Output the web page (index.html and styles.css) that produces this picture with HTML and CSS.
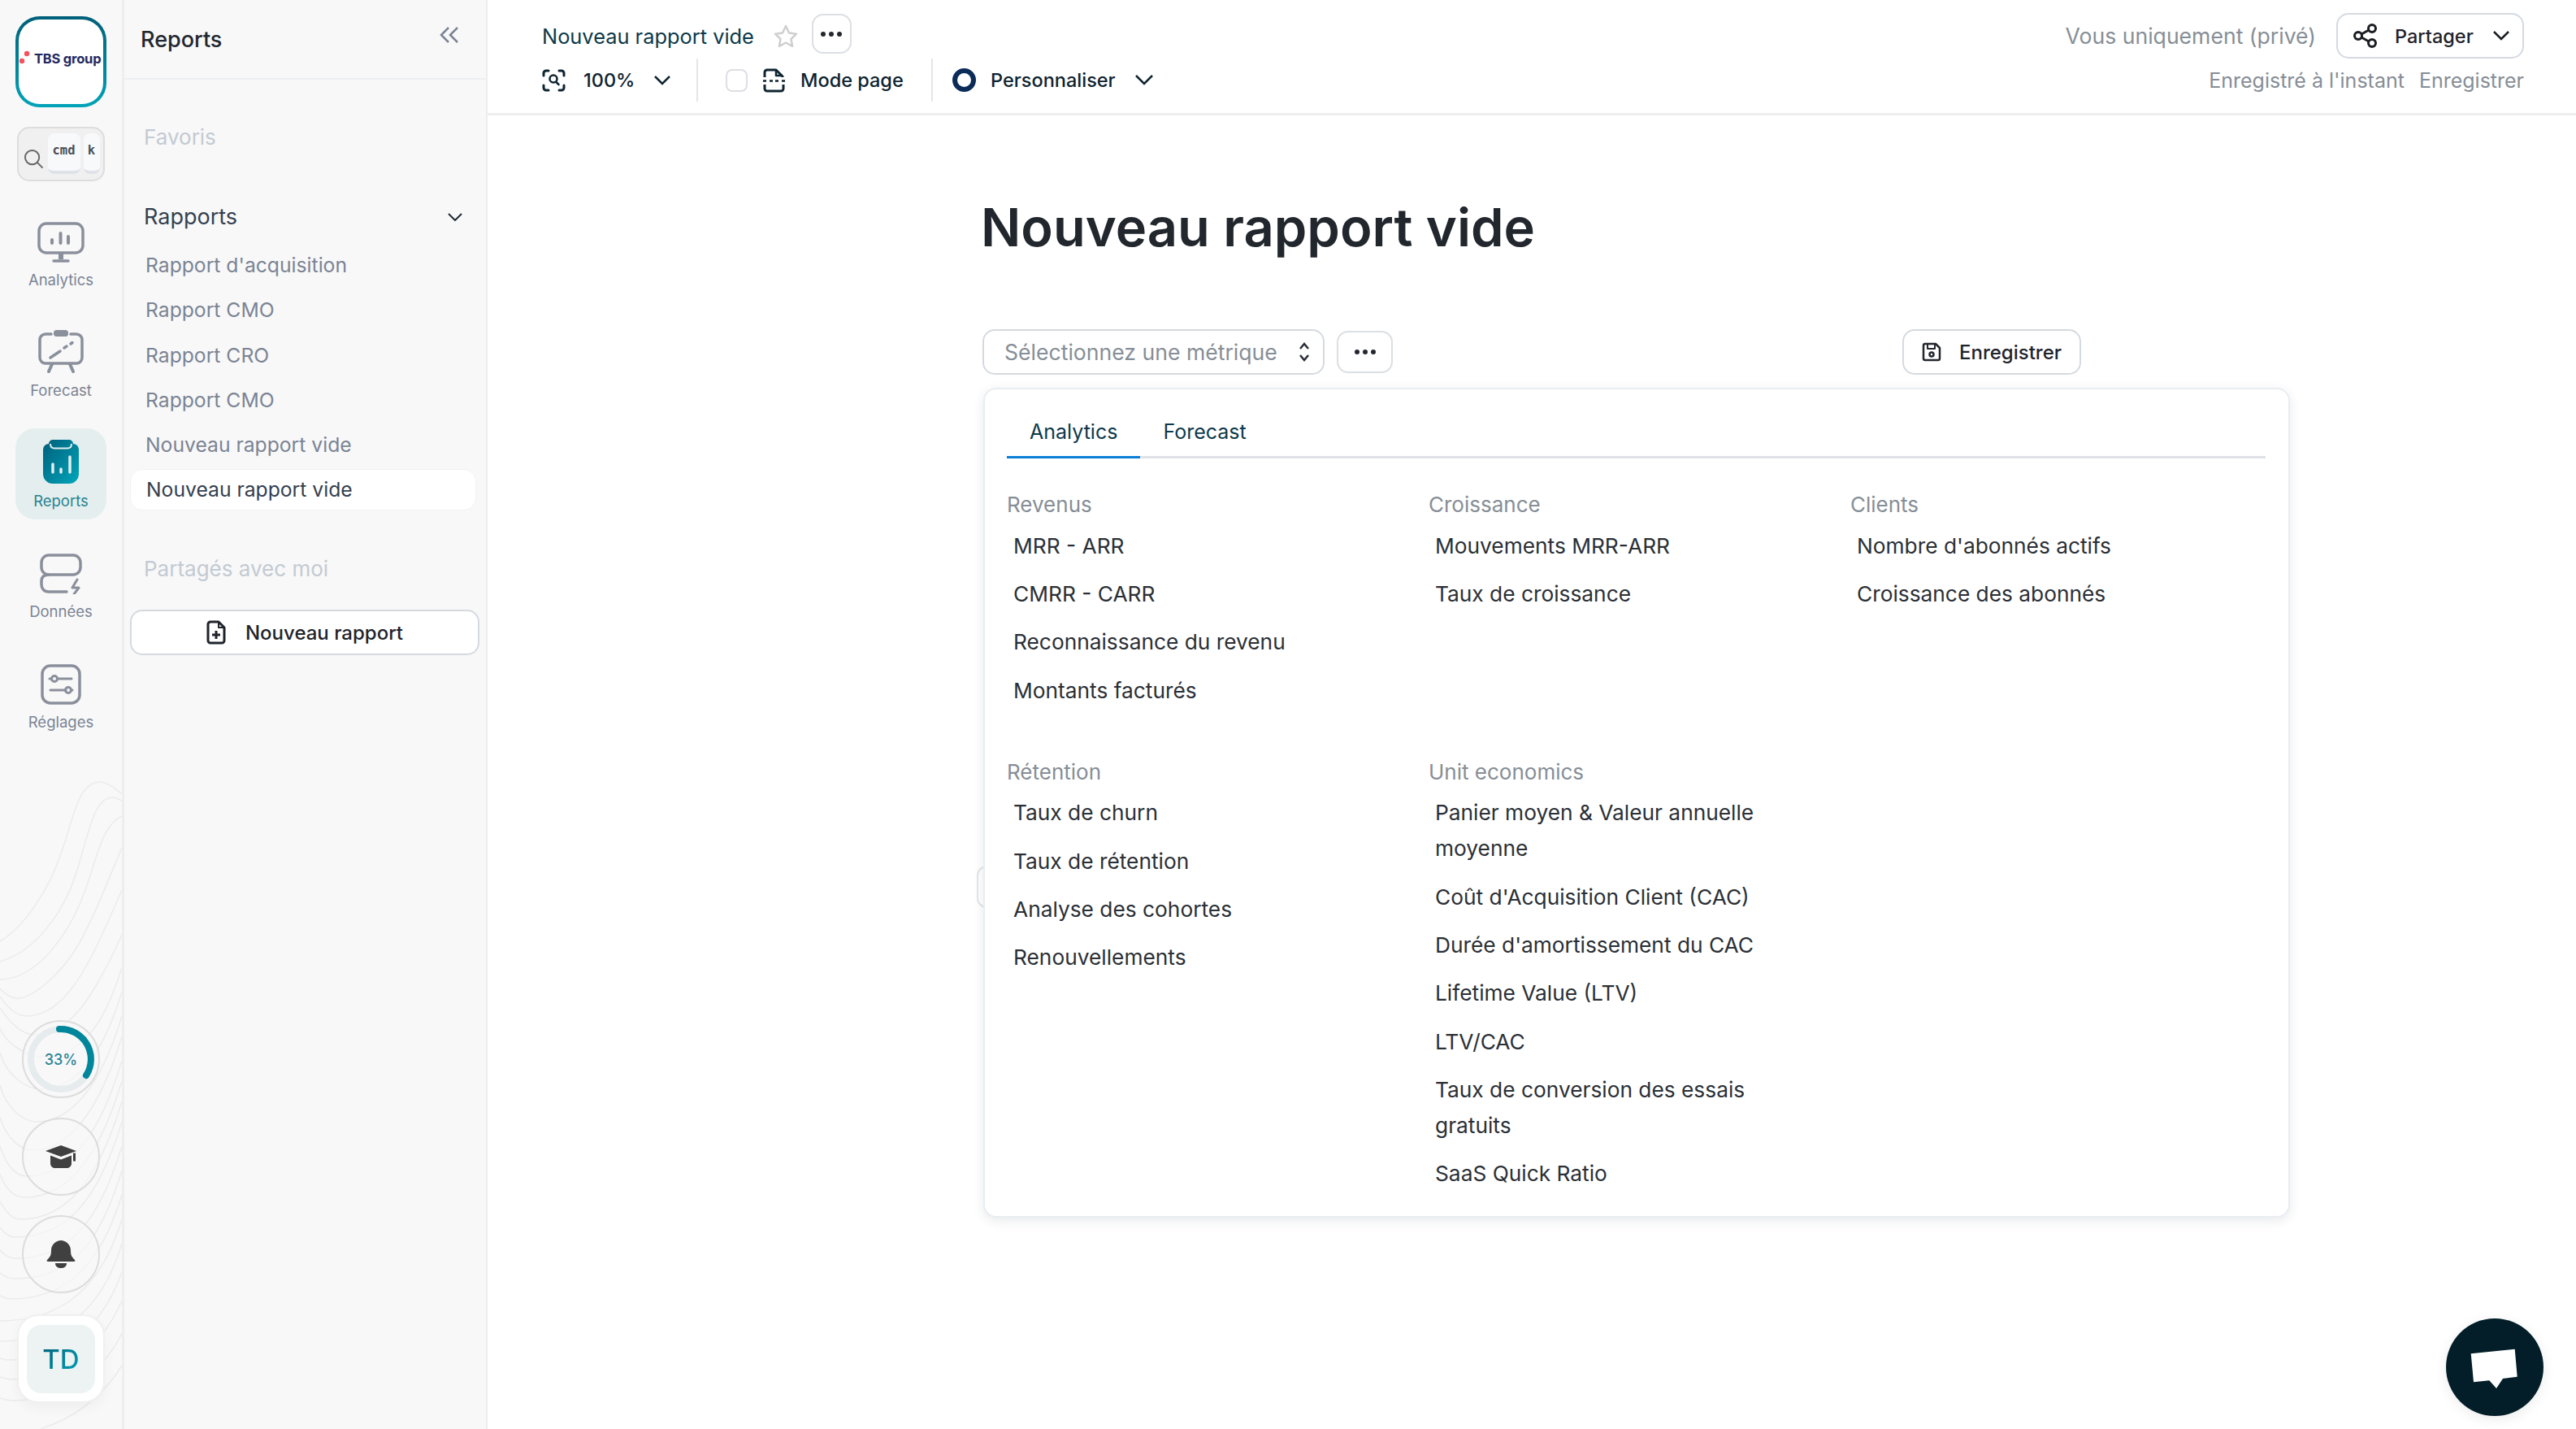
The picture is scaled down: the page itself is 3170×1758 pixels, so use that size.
FILE: index.html
```html
<!DOCTYPE html>
<html lang="fr">
<head>
  <meta charset="UTF-8">
  <title>Nouveau rapport vide</title>
  <link rel="stylesheet" href="styles.css">
</head>
<body>
  <svg width="0" height="0" class="defs">
    <defs>
      <linearGradient id="teal" x1="0" y1="0" x2="1" y2="1">
        <stop offset="0" stop-color="#005f7a"/>
        <stop offset="1" stop-color="#00a6bb"/>
      </linearGradient>
    </defs>
  </svg>

  <div class="app">
    <nav class="rail">
      <svg class="contours" width="150" height="810" viewBox="0 948 150 810" fill="none" stroke="#ebebeb" stroke-width="1.500">
        <path d="M150 977C140 968 130 962 123 962 95 962 90 1010 75 1050 60 1095 30 1140 0 1158"/>
        <path d="M150 985C145 982 142 981 138 981 115 981 108 1030 95 1070 80 1120 45 1170 0 1183"/>
        <path d="M150 1004C125 1015 118 1060 105 1095 85 1150 45 1205 0 1205"/>
        <path d="M150 1043C130 1090 115 1130 95 1165 70 1205 35 1230 20 1228 12 1227 5 1222 0 1216"/>
        <path d="M150 1095C130 1140 110 1190 85 1220 65 1245 45 1250 33 1250 20 1250 8 1238 0 1226"/>
        <path d="M150 1150C130 1195 105 1240 85 1255 70 1270 55 1273 43 1273 25 1273 10 1255 0 1240"/>
        <path d="M150 1190C120 1290 80 1300 50 1300 35 1300 8 1285 0 1265"/>
        <path d="M150 1220C120 1320 80 1340 50 1340 35 1340 8 1325 0 1295"/>
        <path d="M150 1250C120 1350 80 1380 45 1380 30 1380 8 1365 0 1335"/>
        <path d="M150 1275C120 1375 80 1415 40 1415 25 1415 8 1400 0 1375"/>
        <path d="M150 1305C120 1405 80 1447 33 1447 20 1447 8 1435 0 1410"/>
        <path d="M150 1330C120 1430 80 1473 30 1473 18 1473 8 1465 0 1445"/>
        <path d="M150 1355C120 1455 80 1500 25 1500 15 1500 8 1492 0 1478"/>
        <path d="M150 1380C120 1480 80 1522 18 1522 12 1522 6 1518 0 1510"/>
        <path d="M150 1410C120 1510 80 1548 20 1548 12 1548 6 1545 0 1538"/>
        <path d="M150 1440C120 1540 80 1573 18 1573 12 1573 6 1571 0 1566"/>
        <path d="M150 1470C120 1570 70 1598 13 1598 8 1598 4 1596 0 1594"/>
        <path d="M150 1500C120 1600 60 1625 0 1625"/>
        <path d="M150 1530C120 1630 60 1650 0 1650"/>
        <path d="M150 1565C120 1650 60 1673 10 1673 6 1673 3 1672 0 1671"/>
        <path d="M150 1600C120 1670 60 1697 15 1697 10 1697 5 1696 0 1694"/>
        <path d="M150 1640C125 1695 65 1723 15 1723 10 1723 5 1722 0 1720"/>
        <path d="M150 1680C125 1720 90 1745 50 1758"/>
      </svg>

      <div class="logo">
        <svg class="logo-dots" width="14" height="18" viewBox="0 0 14 18"><circle cx="10" cy="4" r="3.200" fill="#f5525f"/><circle cx="4" cy="13" r="3.200" fill="#f5525f"/></svg>
        <span class="logo-text">TBS group</span>
      </div>

      <div class="search">
        <svg width="25" height="25" viewBox="0 0 26 26" fill="none" stroke="#666" stroke-width="2"><circle cx="11" cy="11" r="9"/><path d="M17.500 17.500l7 7"/></svg>
        <span class="key key-cmd">cmd</span>
        <span class="key key-k">k</span>
      </div>

      <a class="rail-item">
        <svg width="58" height="50" viewBox="0 0 58 50" fill="none" stroke="#8a8f9c" stroke-width="3.500" stroke-linecap="round">
          <rect x="2" y="2" width="54" height="36" rx="9"/>
          <path d="M18 22v4M28.500 14v12M38 18v8" stroke-width="4"/>
          <path d="M29 39v7" stroke-width="6" stroke-linecap="butt"/>
          <path d="M20 48h18"/>
        </svg>
        <span>Analytics</span>
      </a>
      <a class="rail-item">
        <svg width="56" height="54" viewBox="0 0 56 54" fill="none" stroke="#8a8f9c" stroke-width="3.500" stroke-linecap="round">
          <path d="M16 6H9a7 7 0 0 0-7 7v22a7 7 0 0 0 7 7h38a7 7 0 0 0 7-7V13a7 7 0 0 0-7-7h-7"/>
          <rect x="19" y="1" width="18" height="8" rx="3.500" fill="#8a8f9c" stroke="none"/>
          <path d="M15 35l12-8M32 23l3-2M40 18l2-1.500"/>
          <path d="M17 43l-4 9M39 43l4 9" stroke-width="4"/>
        </svg>
        <span>Forecast</span>
      </a>
      <a class="rail-item rail-item-on">
        <svg width="44" height="54" viewBox="0 0 44 54">
          <path fill="url(#teal)" d="M12 0h20a5 5 0 0 1 5 5 7 7 0 0 1 7 7v30a12 12 0 0 1-12 12H12A12 12 0 0 1 0 42V12a7 7 0 0 1 7-7 5 5 0 0 1 5-5z"/>
          <path d="M9 5c0 4 2 5.500 5 5.500h16c3 0 5-1.500 5-5.500" fill="none" stroke="#e3eeef" stroke-width="2"/>
          <path d="M12 30v10M22 36v4M33 21v19" stroke="#e3eeef" stroke-width="3.500" stroke-linecap="round"/>
        </svg>
        <span>Reports</span>
      </a>
      <a class="rail-item">
        <svg width="52" height="50" viewBox="0 0 52 50" fill="none" stroke="#8a8f9c" stroke-width="3.500" stroke-linecap="round" stroke-linejoin="round">
          <rect x="2" y="2" width="48" height="24" rx="9"/>
          <path d="M11 26C5 26 2 29 2 34v4c0 5 3 9 9 9h22"/>
          <path d="M46 32l-6 10h8l-6 8" stroke-width="3"/>
        </svg>
        <span>Données</span>
      </a>
      <a class="rail-item">
        <svg width="50" height="50" viewBox="0 0 50 50" fill="none" stroke="#8a8f9c" stroke-width="3.500" stroke-linecap="round">
          <rect x="2" y="2" width="46" height="46" rx="10"/>
          <path d="M21 18h17M11 18h2M12 32h19M38 32h1" stroke-width="3"/>
          <circle cx="17" cy="18" r="3.500" stroke-width="3"/>
          <circle cx="34" cy="32" r="3.500" stroke-width="3"/>
        </svg>
        <span>Réglages</span>
      </a>

      <div class="rail-bottom">
        <div class="circle-btn progress">
          <svg width="92" height="92" viewBox="0 0 92 92" fill="none" stroke-width="8" stroke-linecap="round">
            <circle cx="46" cy="46" r="37" stroke="#e6ebee"/>
            <path d="M44 9A37 37 0 0 1 77 66" stroke="#00869b"/>
          </svg>
          <span class="progress-val">33%</span>
        </div>
        <div class="circle-btn">
          <svg width="40" height="30" viewBox="0 0 40 30" fill="#404040">
            <path d="M20 1L39 8 20 15 1 8z"/>
            <path d="M7 13.500l13 5 13-5V23c0 4-3 6-6 6H13c-3 0-6-2-6-6z"/>
            <rect x="35" y="10.500" width="3" height="10"/>
          </svg>
        </div>
        <div class="circle-btn">
          <svg width="36" height="36" viewBox="0 0 36 36" fill="#404040">
            <path d="M18 1c6 0 12 5 12 12 0 6 1 8 5 12 1 1 0 2-1 2H2c-1 0-2-1-1-2 4-4 5-6 5-12C6 6 12 1 18 1z"/>
            <path d="M11 29h14c0 4-3 6-7 6s-7-2-7-6z"/>
          </svg>
        </div>
        <div class="user-card"><span class="user-avatar"><b>TD</b></span></div>
      </div>
    </nav>

    <aside class="panel">
      <header class="panel-head">
        <span class="panel-title">Reports</span>
        <svg width="24" height="20" viewBox="0 0 24 20" fill="none" stroke="#7b8494" stroke-width="2.500"><path d="M11 1L2 10l9 9M22 1l-9 9 9 9"/></svg>
      </header>
      <div class="panel-body">
        <div class="sec-label sec-favs">Favoris</div>
        <div class="sec-open">
          <span>Rapports</span>
          <svg width="18" height="10" viewBox="0 0 18 10" fill="none" stroke="#1f2a35" stroke-width="2"><path d="M1 1l8 8 8-8"/></svg>
        </div>
        <ul class="report-list">
          <li>Rapport d'acquisition</li>
          <li>Rapport CMO</li>
          <li>Rapport CRO</li>
          <li>Rapport CMO</li>
          <li>Nouveau rapport vide</li>
          <li class="report-on">Nouveau rapport vide</li>
        </ul>
        <div class="sec-label sec-shared">Partagés avec moi</div>
        <button class="new-report">
          <svg width="24" height="30" viewBox="0 0 24 30" fill="none" stroke="#1f242b" stroke-width="3" stroke-linejoin="round"><path d="M15 2H5a3 3 0 0 0-3 3v20a3 3 0 0 0 3 3h14a3 3 0 0 0 3-3V9z"/><path d="M15 2v7h7" stroke-width="2"/><path d="M7 18h10M12 13v10"/></svg>
          Nouveau rapport
        </button>
      </div>
    </aside>

    <main class="main">
      <header class="topbar">
        <div class="top-left">
          <div class="top-row">
            <span class="doc-name">Nouveau rapport vide</span>
            <svg class="star" width="30" height="28" viewBox="0 0 30 28" fill="none" stroke="#cfcfcf" stroke-width="2.500" stroke-linejoin="round"><path d="M15 2l4 8.500 9 1.200-6.500 6.300 1.600 8.800L15 22.500l-8.100 4.300 1.600-8.800L2 11.700l9-1.200z"/></svg>
            <button class="dots-btn dots-top"><i></i><i></i><i></i></button>
          </div>
          <div class="tool-row">
            <div class="tool tool-zoom">
              <svg width="29" height="28" viewBox="0 0 29 28" fill="none" stroke="#0e2430" stroke-width="3" stroke-linecap="round"><path d="M2 8V5a3 3 0 0 1 3-3h3M21 2h3a3 3 0 0 1 3 3v3M27 20v3a3 3 0 0 1-3 3h-3M8 26H5a3 3 0 0 1-3-3v-3"/><circle cx="14" cy="12" r="4.500" stroke-width="2.500"/><path d="M17.500 16l3 3" stroke-width="2.500"/></svg>
              <span class="tool-pct">100%</span>
              <svg width="20" height="12" viewBox="0 0 20 12" fill="none" stroke="#0e2430" stroke-width="2.500"><path d="M1 1l9 9 9-9"/></svg>
            </div>
            <div class="tool tool-page">
              <span class="checkbox"></span>
              <svg width="29" height="30" viewBox="0 0 29 30" fill="none" stroke="#0e2430" stroke-width="3" stroke-linejoin="round"><path d="M3 11V5a3 3 0 0 1 3-3h11l8 8v1M3 20v5a3 3 0 0 0 3 3h17a3 3 0 0 0 3-3v-5"/><path d="M17 2v7h8M1 15.500h4M9 15.500h4M16 15.500h4M24 15.500h4" stroke-width="2.500"/></svg>
              <span>Mode page</span>
            </div>
            <div class="tool tool-custom">
              <span class="ring"></span>
              <span>Personnaliser</span>
              <svg width="22" height="13" viewBox="0 0 22 13" fill="none" stroke="#0e2430" stroke-width="2.500"><path d="M1 1l10 10 10-10"/></svg>
            </div>
          </div>
        </div>
        <div class="top-right">
          <div class="top-row top-row-end">
            <span class="muted private">Vous uniquement (privé)</span>
            <button class="share-btn">
              <svg width="30" height="30" viewBox="0 0 30 30" fill="none" stroke="#1a1d22" stroke-width="3"><circle cx="6" cy="15" r="4.500"/><circle cx="23" cy="6" r="4.500"/><circle cx="23" cy="24" r="4.500"/><path d="M10 13l9-5M10 17l9 5"/></svg>
              <span>Partager</span>
              <svg class="share-caret" width="20" height="12" viewBox="0 0 20 12" fill="none" stroke="#1a1d22" stroke-width="2.500"><path d="M1 1l9 9 9-9"/></svg>
            </button>
          </div>
          <div class="save-row muted">
            <span>Enregistré à l'instant</span>
            <span>Enregistrer</span>
          </div>
        </div>
      </header>

      <section class="report">
        <h1>Nouveau rapport vide</h1>
        <div class="metric-bar">
          <div class="select">
            <span>Sélectionnez une métrique</span>
            <svg width="14" height="26" viewBox="0 0 14 26" fill="none" stroke="#2a2f36" stroke-width="2.500"><path d="M2 9l5-6 5 6M2 17l5 6 5-6"/></svg>
          </div>
          <button class="dots-btn dots-metric"><i></i><i></i><i></i></button>
          <button class="save-btn">
            <svg width="24" height="24" viewBox="0 0 24 24" fill="none" stroke="#23272e" stroke-width="2.500" stroke-linejoin="round"><path d="M4 2h13l5 5v13a2 2 0 0 1-2 2H4a2 2 0 0 1-2-2V4a2 2 0 0 1 2-2z"/><path d="M7 2v6h9V2" stroke-width="2"/><circle cx="12" cy="15" r="2.500"/></svg>
            Enregistrer
          </button>
        </div>

        <div class="card-wrap">
          <span class="side-tab"></span>
          <div class="card">
            <div class="tabs">
              <span class="tab tab-on">Analytics</span>
              <span class="tab">Forecast</span>
            </div>
            <div class="groups">
              <div class="group">
                <h3>Revenus</h3>
                <div class="metric">MRR - ARR</div>
                <div class="metric">CMRR - CARR</div>
                <div class="metric">Reconnaissance du revenu</div>
                <div class="metric">Montants facturés</div>
              </div>
              <div class="group">
                <h3>Croissance</h3>
                <div class="metric">Mouvements MRR-ARR</div>
                <div class="metric">Taux de croissance</div>
              </div>
              <div class="group">
                <h3>Clients</h3>
                <div class="metric">Nombre d'abonnés actifs</div>
                <div class="metric">Croissance des abonnés</div>
              </div>
              <div class="group">
                <h3>Rétention</h3>
                <div class="metric">Taux de churn</div>
                <div class="metric">Taux de rétention</div>
                <div class="metric">Analyse des cohortes</div>
                <div class="metric">Renouvellements</div>
              </div>
              <div class="group">
                <h3>Unit economics</h3>
                <div class="metric">Panier moyen &amp; Valeur annuelle moyenne</div>
                <div class="metric">Coût d'Acquisition Client (CAC)</div>
                <div class="metric">Durée d'amortissement du CAC</div>
                <div class="metric">Lifetime Value (LTV)</div>
                <div class="metric">LTV/CAC</div>
                <div class="metric">Taux de conversion des essais gratuits</div>
                <div class="metric">SaaS Quick Ratio</div>
              </div>
            </div>
          </div>
        </div>
      </section>
    </main>
  </div>

  <button class="chat">
    <svg width="120" height="120" viewBox="0 0 120 120"><path fill="#fff" d="M30.700 43.300L84.700 37.700 87.700 71.700 70 74 62 86 53.300 76.300 34 78.300z"/></svg>
  </button>
</body>
</html>
```

FILE: styles.css
```css
* {
  box-sizing: border-box;
}
html, body {
  margin: 0;
  height: 100%;
}
body {
  font-family: Inter, "Noto Sans", sans-serif;
  font-size: 25px;
  color: #1f242b;
  background: #fff;
  overflow: hidden;
}
button {
  font: inherit;
  color: inherit;
  background: #fff;
  cursor: pointer;
}
.defs {
  position: absolute;
}
.app {
  display: flex;
  height: 1758px;
}

/* left rail */
.rail {
  position: relative;
  flex: 0 0 153px;
  display: flex;
  flex-direction: column;
  align-items: center;
  padding: 20px 0 0 0;
  background: #f8f8f8;
  border-right: 3px solid #eeeeee;
}
.rail > * {
  position: relative;
}
.rail > .contours {
  position: absolute;
  left: 0;
  bottom: 0;
}
.logo {
  width: 112px;
  height: 112px;
  display: flex;
  align-items: center;
  border: 4px solid transparent;
  border-radius: 30px;
  background: linear-gradient(#fff, #fff) padding-box, linear-gradient(#006079, #00a3b8) border-box;
}
.logo-dots {
  flex: none;
  margin: -10px 5px 0 0;
}
.logo-text {
  font-size: 16.500px;
  font-weight: 700;
  letter-spacing: -0.2px;
  color: #23285f;
  white-space: nowrap;
  margin-top: -8px;
}
.search {
  width: 108px;
  height: 67px;
  margin-top: 24px;
  display: flex;
  align-items: flex-start;
  padding: 5.500px 4px 0 5.500px;
  background: #f0f0f0;
  border: 2.500px solid #dddddd;
  border-radius: 15px;
}
.search svg {
  flex: none;
  margin: 19px 5px 0 0;
}
.key {
  height: 50px;
  display: flex;
  align-items: center;
  justify-content: center;
  padding-bottom: 4px;
  font-family: "DejaVu Sans Mono", monospace;
  font-size: 15.500px;
  font-weight: 700;
  color: #4a4f55;
  background: #f8f9fb;
  border-bottom: 4px solid #dfe2e8;
  border-radius: 8px;
}
.key-cmd {
  flex: 0 0 40px;
  margin-right: 4px;
}
.key-k {
  flex: 0 0 20px;
}
.rail-item {
  width: 112px;
  height: 112px;
  margin-top: 24px;
  display: flex;
  flex-direction: column;
  align-items: center;
  justify-content: flex-end;
  gap: 10px;
  padding-bottom: 12px;
  font-size: 18.500px;
  color: #7b8494;
  border-radius: 24px;
}
.search + .rail-item {
  margin-top: 32px;
}
.rail-item-on {
  background: #e4eeee;
  color: #2a8390;
}
.rail-bottom {
  margin-top: auto;
  margin-bottom: 32px;
  display: flex;
  flex-direction: column;
  align-items: center;
  gap: 24px;
}
.circle-btn {
  position: relative;
  width: 96px;
  height: 96px;
  display: flex;
  align-items: center;
  justify-content: center;
  border: 2.500px solid #dcdcdc;
  border-radius: 50%;
  background: rgba(248, 248, 248, 0.6);
}
.progress-val {
  position: absolute;
  font-size: 18px;
  font-weight: 500;
  color: #2b8494;
}
.user-card {
  width: 108px;
  height: 109px;
  margin-top: 2px;
  display: flex;
  align-items: center;
  justify-content: center;
  background: #fff;
  border: 2px solid #f0f0f0;
  border-radius: 26px;
  box-shadow: 0 6px 16px rgba(0, 0, 0, 0.04);
}
.user-avatar {
  width: 84px;
  height: 84px;
  display: flex;
  align-items: center;
  justify-content: center;
  background: #edf2f3;
  border-radius: 18px;
}
.user-avatar b {
  font-size: 33px;
  font-weight: 500;
  color: transparent;
  background: linear-gradient(135deg, #006079, #00a3b8);
  -webkit-background-clip: text;
  background-clip: text;
}

/* reports panel */
.panel {
  flex: 0 0 447px;
  min-width: 0;
  background: #f8f8f8;
  border-right: 2px solid #eeeeee;
}
.panel-head {
  height: 98px;
  display: flex;
  align-items: center;
  justify-content: space-between;
  padding: 0 33px 0 20px;
  border-bottom: 2px solid #eceff2;
}
.panel-head svg {
  margin-top: -10px;
}
.panel-title {
  font-size: 27px;
  font-weight: 500;
  color: #22272e;
}
.panel-body {
  padding: 0 12px 0 7px;
}
.sec-label {
  padding-left: 17px;
  font-size: 26px;
  line-height: 36px;
  color: #c3cad3;
}
.sec-favs {
  margin-top: 53px;
}
.sec-open {
  margin-top: 62px;
  padding: 0 17px 0 17px;
  display: flex;
  align-items: center;
  justify-content: space-between;
  font-size: 27px;
  line-height: 36px;
  color: #344050;
}
.report-list {
  list-style: none;
  margin: 16px 0 0;
  padding: 0;
}
.report-list li {
  height: 51px;
  margin-bottom: 4.300px;
  padding-left: 19px;
  line-height: 51px;
  font-size: 24.700px;
  color: #7b8494;
}
.report-list .report-on {
  padding-left: 19px;
  color: #344050;
  background: #fff;
  border: 1px solid #f2f2f2;
  border-radius: 15px;
  line-height: 49px;
}
.sec-shared {
  margin-top: 54px;
}
.new-report {
  width: 430px;
  height: 56px;
  margin-top: 32px;
  display: flex;
  align-items: center;
  justify-content: center;
  gap: 24px;
  font-size: 24px;
  font-weight: 500;
  border: 2px solid #d5dae0;
  border-radius: 15px;
}

/* top bar */
.main {
  flex: 1;
  min-width: 0;
  position: relative;
}
.topbar {
  height: 142px;
  display: flex;
  justify-content: space-between;
  padding: 19px 64px 0 67px;
  border-bottom: 3px solid #eeeeee;
}
.top-row {
  height: 50px;
  display: flex;
  align-items: center;
}
.top-row-end {
  justify-content: flex-end;
}
.doc-name {
  font-size: 25.400px;
  color: #0d3a4a;
}
.star {
  margin: 0 17px 0 24px;
}
.dots-btn {
  display: flex;
  align-items: center;
  justify-content: center;
  gap: 4px;
  padding: 0;
  border: 2px solid #dcdfe3;
  border-radius: 14px;
}
.dots-btn i {
  width: 6px;
  height: 6px;
  border-radius: 50%;
  background: #23272e;
}
.dots-top {
  width: 49px;
  height: 49px;
  margin-top: -5px;
}
.tool-row {
  margin-top: 3px;
  display: flex;
  align-items: center;
}
.tool {
  height: 53px;
  display: flex;
  align-items: center;
  font-size: 23.500px;
  color: #0e2430;
  font-weight: 500;
}
.tool-zoom {
  width: 190px;
}
.tool-zoom svg:first-child {
  margin: 0 22px 0 0;
}
.tool-pct {
  width: 87px;
}
.tool-page {
  width: 289px;
  padding-left: 34px;
  border-left: 2px solid #e6e6e6;
}
.checkbox {
  width: 27px;
  height: 28px;
  margin-right: 18px;
  border: 2px solid #dcdfe3;
  border-radius: 8px;
}
.tool-page svg {
  margin-right: 18px;
}
.tool-custom {
  padding-left: 24px;
  border-left: 2px solid #e6e6e6;
}
.ring {
  width: 29px;
  height: 29px;
  margin-right: 18px;
  border: 6px solid #0b2c58;
  border-radius: 50%;
}
.tool-custom svg {
  margin-left: 24px;
}
.muted {
  color: #868e96;
}
.private {
  font-size: 26.600px;
}
.share-btn {
  width: 231px;
  height: 56px;
  margin-left: 25px;
  display: flex;
  align-items: center;
  padding: 0 16px 0 19px;
  font-size: 23.500px;
  font-weight: 500;
  border: 2px solid #d5dae0;
  border-radius: 15px;
}
.share-btn span {
  margin-left: 21px;
}
.share-caret {
  margin-left: auto;
}
.save-row {
  margin-top: 3px;
  height: 53px;
  display: flex;
  align-items: center;
  justify-content: flex-end;
  gap: 18px;
}

/* report body */
.report {
  width: 1609px;
  margin-left: 609px;
}
.report h1 {
  margin: 97px 0 0 -2px;
  font-size: 65px;
  line-height: 82px;
  font-weight: 600;
  color: #22272e;
}
.metric-bar {
  margin-top: 84px;
  display: flex;
  align-items: center;
}
.select {
  width: 421px;
  height: 56px;
  display: flex;
  align-items: center;
  justify-content: space-between;
  padding: 0 16px 0 25px;
  font-size: 26.600px;
  color: #868e96;
  border: 2px solid #d5dae0;
  border-radius: 15px;
}
.dots-metric {
  width: 69px;
  height: 52px;
  margin-left: 15px;
}
.save-btn {
  width: 220px;
  height: 56px;
  margin-left: 627px;
  display: flex;
  align-items: center;
  justify-content: center;
  gap: 22px;
  font-size: 24px;
  font-weight: 500;
  border: 2px solid #d5dae0;
  border-radius: 15px;
}
.card-wrap {
  position: relative;
  margin: 16px 0 0 1px;
}
.side-tab {
  position: absolute;
  left: -8px;
  top: 588px;
  width: 30px;
  height: 52px;
  border: 2px solid #e2e5e9;
  border-radius: 12px;
}
.card {
  position: relative;
  height: 1021px;
  padding: 23px 28px 0 27px;
  background: #fff;
  border: 2px solid #e9edf1;
  border-radius: 16px;
  box-shadow: 0 4px 14px rgba(30, 50, 70, 0.1);
}
.tabs {
  display: flex;
  border-bottom: 3px solid #dee2e6;
}
.tab {
  height: 62px;
  margin-bottom: -3px;
  padding: 8px 28px 0;
  line-height: 42px;
  color: #0d3a4a;
  font-weight: 400;
}
.tab-on {
  border-bottom: 3px solid #0b7fd8;
}
.groups {
  margin-top: 39px;
  display: grid;
  grid-template-columns: 519px 519px 1fr;
  row-gap: 52px;
}
.group h3 {
  margin: 0 0 3px;
  font-size: 26px;
  line-height: 36px;
  font-weight: 400;
  color: #868e96;
}
.metric {
  max-width: 430px;
  padding: 7.700px 8px;
  font-size: 26.300px;
  line-height: 44px;
  color: #2b3036;
}
.chat {
  position: fixed;
  left: 3010px;
  top: 1622px;
  width: 120px;
  height: 120px;
  padding: 0;
  border: 0;
  border-radius: 50%;
  background: #031e28;
  box-shadow: 0 4px 16px rgba(0, 0, 0, 0.08);
}
.chat svg {
  display: block;
}
```
